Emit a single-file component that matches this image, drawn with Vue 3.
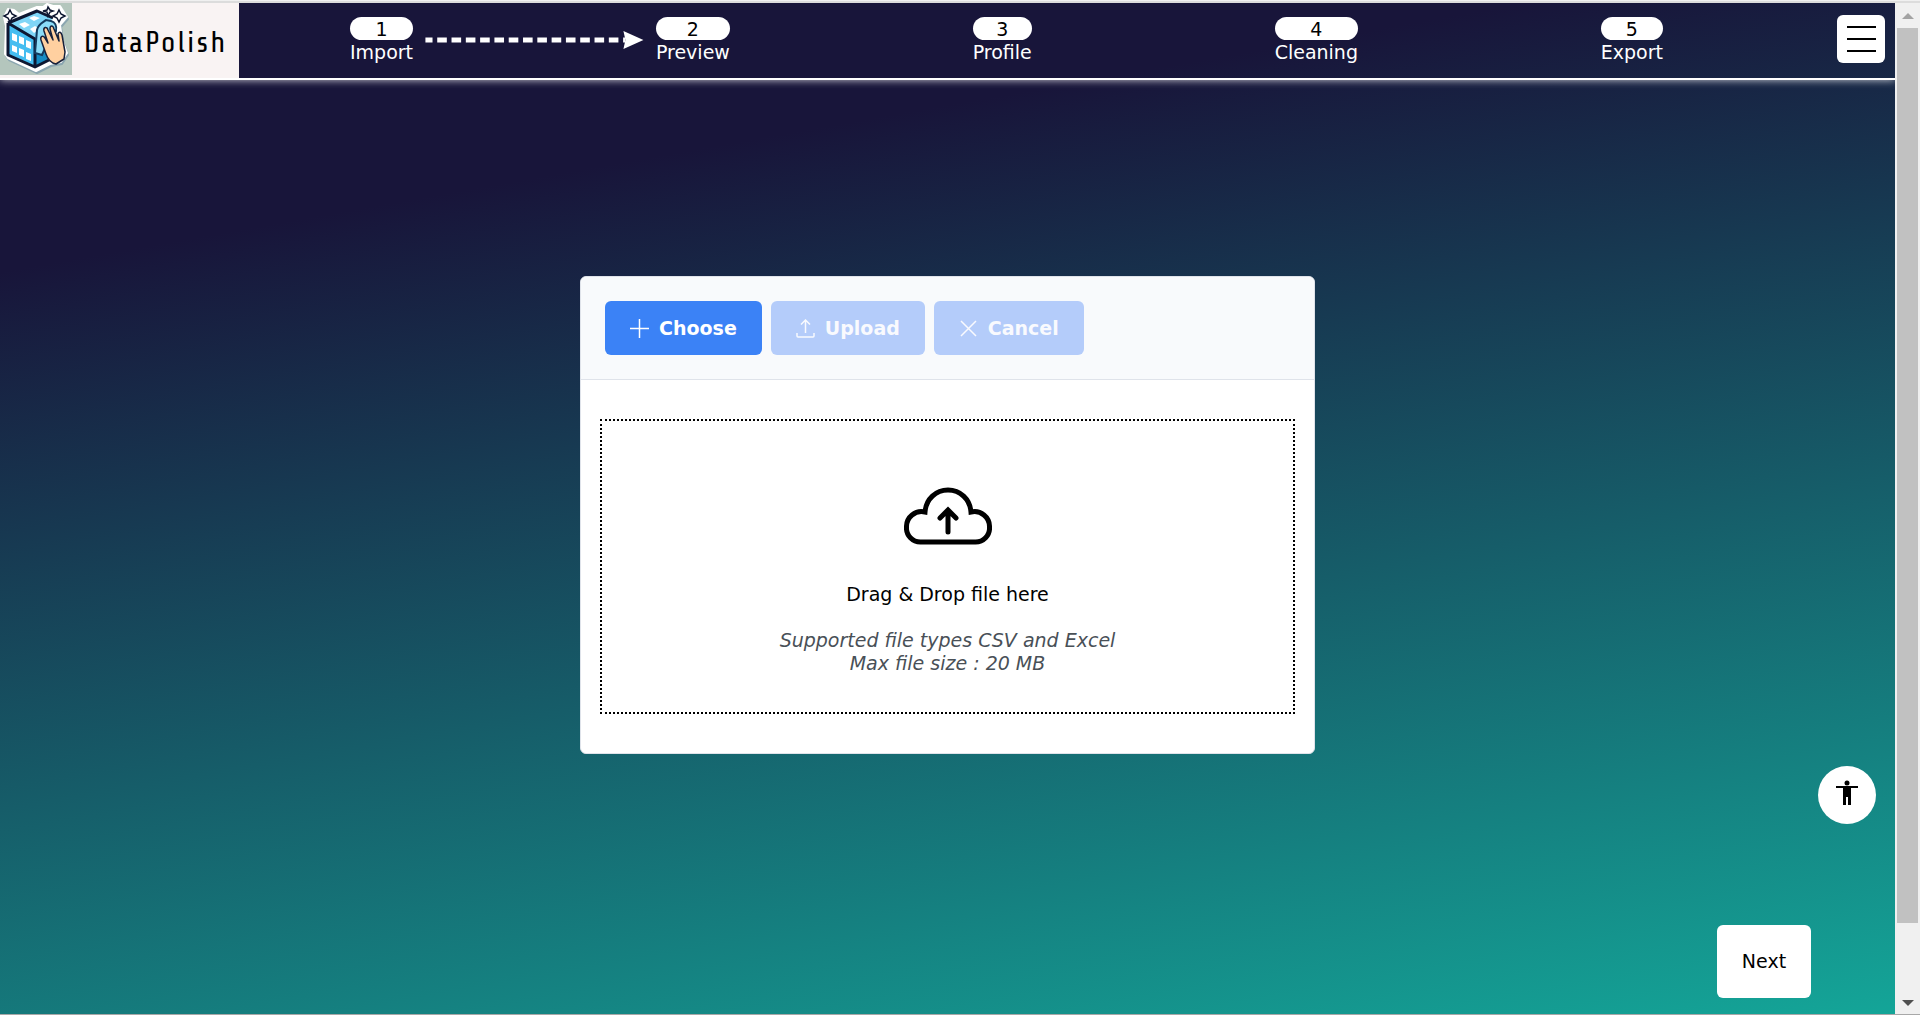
<script setup>
const steps = ['Import', 'Preview', 'Profile', 'Cleaning', 'Export']
</script>

<template>
  <div class="window">
    <div class="page">
      <header class="topbar">
        <a class="brand" href="#">
          <svg class="logo" viewBox="0 0 72 72" aria-hidden="true">
            <rect width="72" height="72" fill="#b4c6bd" />
            <path d="M4 14 8 6l6 1 5 4 18-7 6 0 4-3 6 2 7 0 7 11-7 8 2 14 5 14-6 9-11 2-14 7L8 55l-3-4 1-28z" fill="#8ba6b0" stroke="#8ba6b0" stroke-width="2" stroke-linejoin="round" transform="translate(1 2)" />
            <path d="M4 14 8 6l6 1 5 4 18-7 6 0 4-3 6 2 7 0 7 11-7 8 2 14 5 14-6 9-11 2-14 7L8 55l-3-4 1-28z" fill="#fff" stroke="#fff" stroke-width="2" stroke-linejoin="round" />
            <path d="m8 20 29-12 16 7-18 22z" fill="#7fd6f7" />
            <path d="M8 20 35 36v28L9 52z" fill="#45bdf0" />
            <path d="M35 36 54 20v35L35 64z" fill="#168bc3" />
            <path d="m19 21 6-2 5 3-6 3zm10-6 5-2 6 2-6 3zm1 11 5-3 5 3-6 4z" fill="#fff" />
            <path d="m12 30 5 2v7l-5-2zm7 3 5 2v7l-5-2zm7 4 5 2v7l-5-2zM12 42l5 2v6l-5-2zm7 3 5 2v7l-5-2zm7 4 5 2v7l-5-2z" fill="#fff" />
            <path d="m8 20 29-12 16 7M8 20v32l27 12 18-9M8 20l27 16v28" fill="none" stroke="#0e1731" stroke-width="3" stroke-linejoin="round" />
            <path d="M37 27c1-6 7-8 9-10l5 1c4 1 6 5 5 10L46 43l-4 9-7-2z" fill="#8bdcf8" stroke="#143b5e" stroke-width="2" />
            <path d="m46 51-5-14c-1-4 2-5 4-2l3 5-4-12c-1-4 3-5 4-1l5 10-3-11c0-4 3-4 4 0l5 12-1-7c1-3 3-2 4 1l3 17-1 7-8 5c-5-1-8-4-10-10z" fill="#ffd0a0" stroke="#18213a" stroke-width="1.5" stroke-linejoin="round" />
            <path d="m10 7 2 4 4 2-4 2-2 4-2-4-4-2 4-2zM48 4l2 3 3 1-3 1-2 4-1-4-4-1 4-1zM59 7l2 4 4 2-4 2-2 4-2-4-4-2 4-2z" fill="#fff" stroke="#0e1731" stroke-width="1.5" />
          </svg>
          <span class="brand-name">DataPolish</span>
        </a>
        <nav class="steps" aria-label="Steps">
          <template v-for="(step, i) in steps" :key="step">
            <span v-if="i > 0" class="link">
              <svg v-if="i === 1" class="arrow" viewBox="0 0 218 20" aria-hidden="true">
                <path d="M0 10h200" stroke="#fff" stroke-width="5" stroke-dasharray="9.6 4.7" stroke-dashoffset="2.5" />
                <path d="m198 1 20 9-20 9 2-9z" fill="#fff" />
              </svg>
            </span>
            <a class="step" href="#">
              <span class="num">{{ i + 1 }}</span>
              <span>{{ step }}</span>
            </a>
          </template>
        </nav>
        <button class="menu" type="button" aria-label="Menu"><i></i><i></i><i></i></button>
      </header>

      <main class="main">
        <section class="upload">
          <div class="actions">
            <button class="btn" type="button">
              <svg viewBox="0 0 19 19" aria-hidden="true"><path d="M9.5 0v19M0 9.5h19" /></svg>Choose
            </button>
            <button class="btn" type="button" disabled>
              <svg viewBox="0 0 19 19" aria-hidden="true"><path d="M9.5 14V1M5 5.5 9.5 1 14 5.5M1 14v3q0 1 1 1h15q1 0 1-1v-3" /></svg>Upload
            </button>
            <button class="btn" type="button" disabled>
              <svg viewBox="0 0 19 19" aria-hidden="true"><path d="m2 2 15 15M17 2 2 17" /></svg>Cancel
            </button>
          </div>
          <div class="content">
            <div class="drop">
              <svg class="cloud" viewBox="0 0 88 58" aria-hidden="true">
                <path d="M17 55a14 14 0 0 1-14.500-15A15 15 0 0 1 21 25C22 12 32 3 44 3s22 9 23 22a15 15 0 0 1 18.500 15A14 14 0 0 1 71 55z" />
                <path d="M44 45V24M36 31l8-8 8 8" stroke-linecap="round" />
              </svg>
              <p>Drag &amp; Drop file here</p>
              <p class="hint">Supported file types CSV and Excel<br />Max file size : 20 MB</p>
            </div>
          </div>
        </section>
      </main>

      <button class="access" type="button" aria-label="Accessibility">
        <svg viewBox="0 0 22 25" aria-hidden="true"><circle cx="11" cy="3" r="2.5" /><path d="M0 6h22v2h-7v17h-3v-8h-2v8H7V8H0z" /></svg>
      </button>
      <button class="next" type="button">Next</button>
    </div>
    <div class="scroll" aria-hidden="true">
      <svg viewBox="0 0 12 6"><path d="M6 0l6 6H0z" fill="#a3a3a3" /></svg>
      <div class="thumb"></div>
      <svg viewBox="0 0 12 6"><path d="M0 0h12L6 6z" fill="#505050" /></svg>
    </div>
  </div>
</template>

<style>
body { margin: 0; background: #fff; }
</style>

<style scoped>
* { box-sizing: border-box; }
.window {
  display: flex;
  min-height: 100vh;
  border-top: 1px solid #f0f0f0;
  border-bottom: 1px solid #a8a8a8;
  font-family: Verdana, "DejaVu Sans", sans-serif;
  font-size: 19px;
  line-height: 23px;
}
.page {
  position: relative;
  flex: 1;
  display: flex;
  flex-direction: column;
  border-top: 2px solid #dcdcdc;
  background: linear-gradient(170deg, #18153a 20%, #14a598 100%);
}
.topbar {
  display: flex;
  height: 77px;
  border-bottom: 2px solid #fff;
  box-shadow: 0 0 8px rgba(255, 255, 255, 0.8);
  clip-path: inset(0 0 -12px 0);
}
a { color: inherit; text-decoration: none; }
.brand { display: flex; width: 239px; background: #f9f3f3; color: #000; }
.logo { width: 72px; height: 72px; }
.brand-name {
  flex: 1;
  text-align: center;
  font-family: "Share Tech", Roboto, sans-serif;
  font-size: 30px;
  letter-spacing: 2px;
  line-height: 78px;
}
.steps { flex: 1; display: flex; padding: 14px 164px 0 111px; color: #fff; line-height: 25px; }
.step { display: flex; flex-direction: column; }
.num { height: 23px; background: #fff; color: #000; border-radius: 12px; text-align: center; }
.link { flex: 1; padding: 13px 12px 0; }
.arrow { display: block; width: 100%; height: 20px; }
.menu {
  display: flex;
  flex-direction: column;
  align-items: center;
  justify-content: space-between;
  width: 48px;
  height: 48px;
  margin: 12px 10px;
  padding: 11px 10px;
  border: 0;
  border-radius: 6px;
  background: #fff;
}
.menu i { width: 29px; height: 2px; background: #000; }
.main { flex: 1; display: flex; justify-content: center; align-items: flex-start; padding-top: 196px; }
.upload { width: 735px; border: 1px solid #dfe3ea; border-radius: 6px; background: #fff; overflow: hidden; }
.actions { display: flex; gap: 9px; padding: 24px; background: #f8fafc; border-bottom: 1px solid #dfe3ea; }
.btn {
  display: flex;
  align-items: center;
  gap: 10px;
  height: 54px;
  padding: 0 25px;
  border: 0;
  border-radius: 6px;
  background: #3b82f6;
  color: #fff;
  font: bold 19px/23px Verdana, "DejaVu Sans", sans-serif;
}
.btn:disabled { background: #b4ccfa; color: #f9fafe; }
.btn svg { width: 19px; height: 19px; fill: none; stroke: currentColor; stroke-width: 1.5; }
.content { padding: 39px 19px; }
.drop { display: flex; flex-direction: column; align-items: center; height: 295px; padding-top: 66px; border: 2px dotted #000; text-align: center; }
.cloud { width: 88px; height: 58px; fill: none; stroke: #000; stroke-width: 5; }
p { margin: 38px 0 0; }
.hint { margin-top: 23px; color: #495057; font-style: italic; }
.access {
  position: absolute;
  right: 19px;
  bottom: 190px;
  width: 58px;
  height: 58px;
  padding: 0 0 2px;
  border: 0;
  border-radius: 50%;
  background: #fff;
}
.access svg { width: 22px; height: 25px; }
.next {
  position: absolute;
  right: 84px;
  bottom: 16px;
  width: 94px;
  height: 73px;
  border: 0;
  border-radius: 6px;
  background: #fff;
  color: #000;
  font: 19px/23px Verdana, "DejaVu Sans", sans-serif;
}
.scroll { display: flex; flex-direction: column; align-items: center; width: 25px; padding: 10px 2px 8px; background: #f0f0f0; border-top: 2px solid #dcdcdc; }
.scroll svg { width: 12px; height: 6px; }
.thumb { flex: 1; width: 21px; margin: 9px 0 77px; background: #c1c1c1; }
</style>
